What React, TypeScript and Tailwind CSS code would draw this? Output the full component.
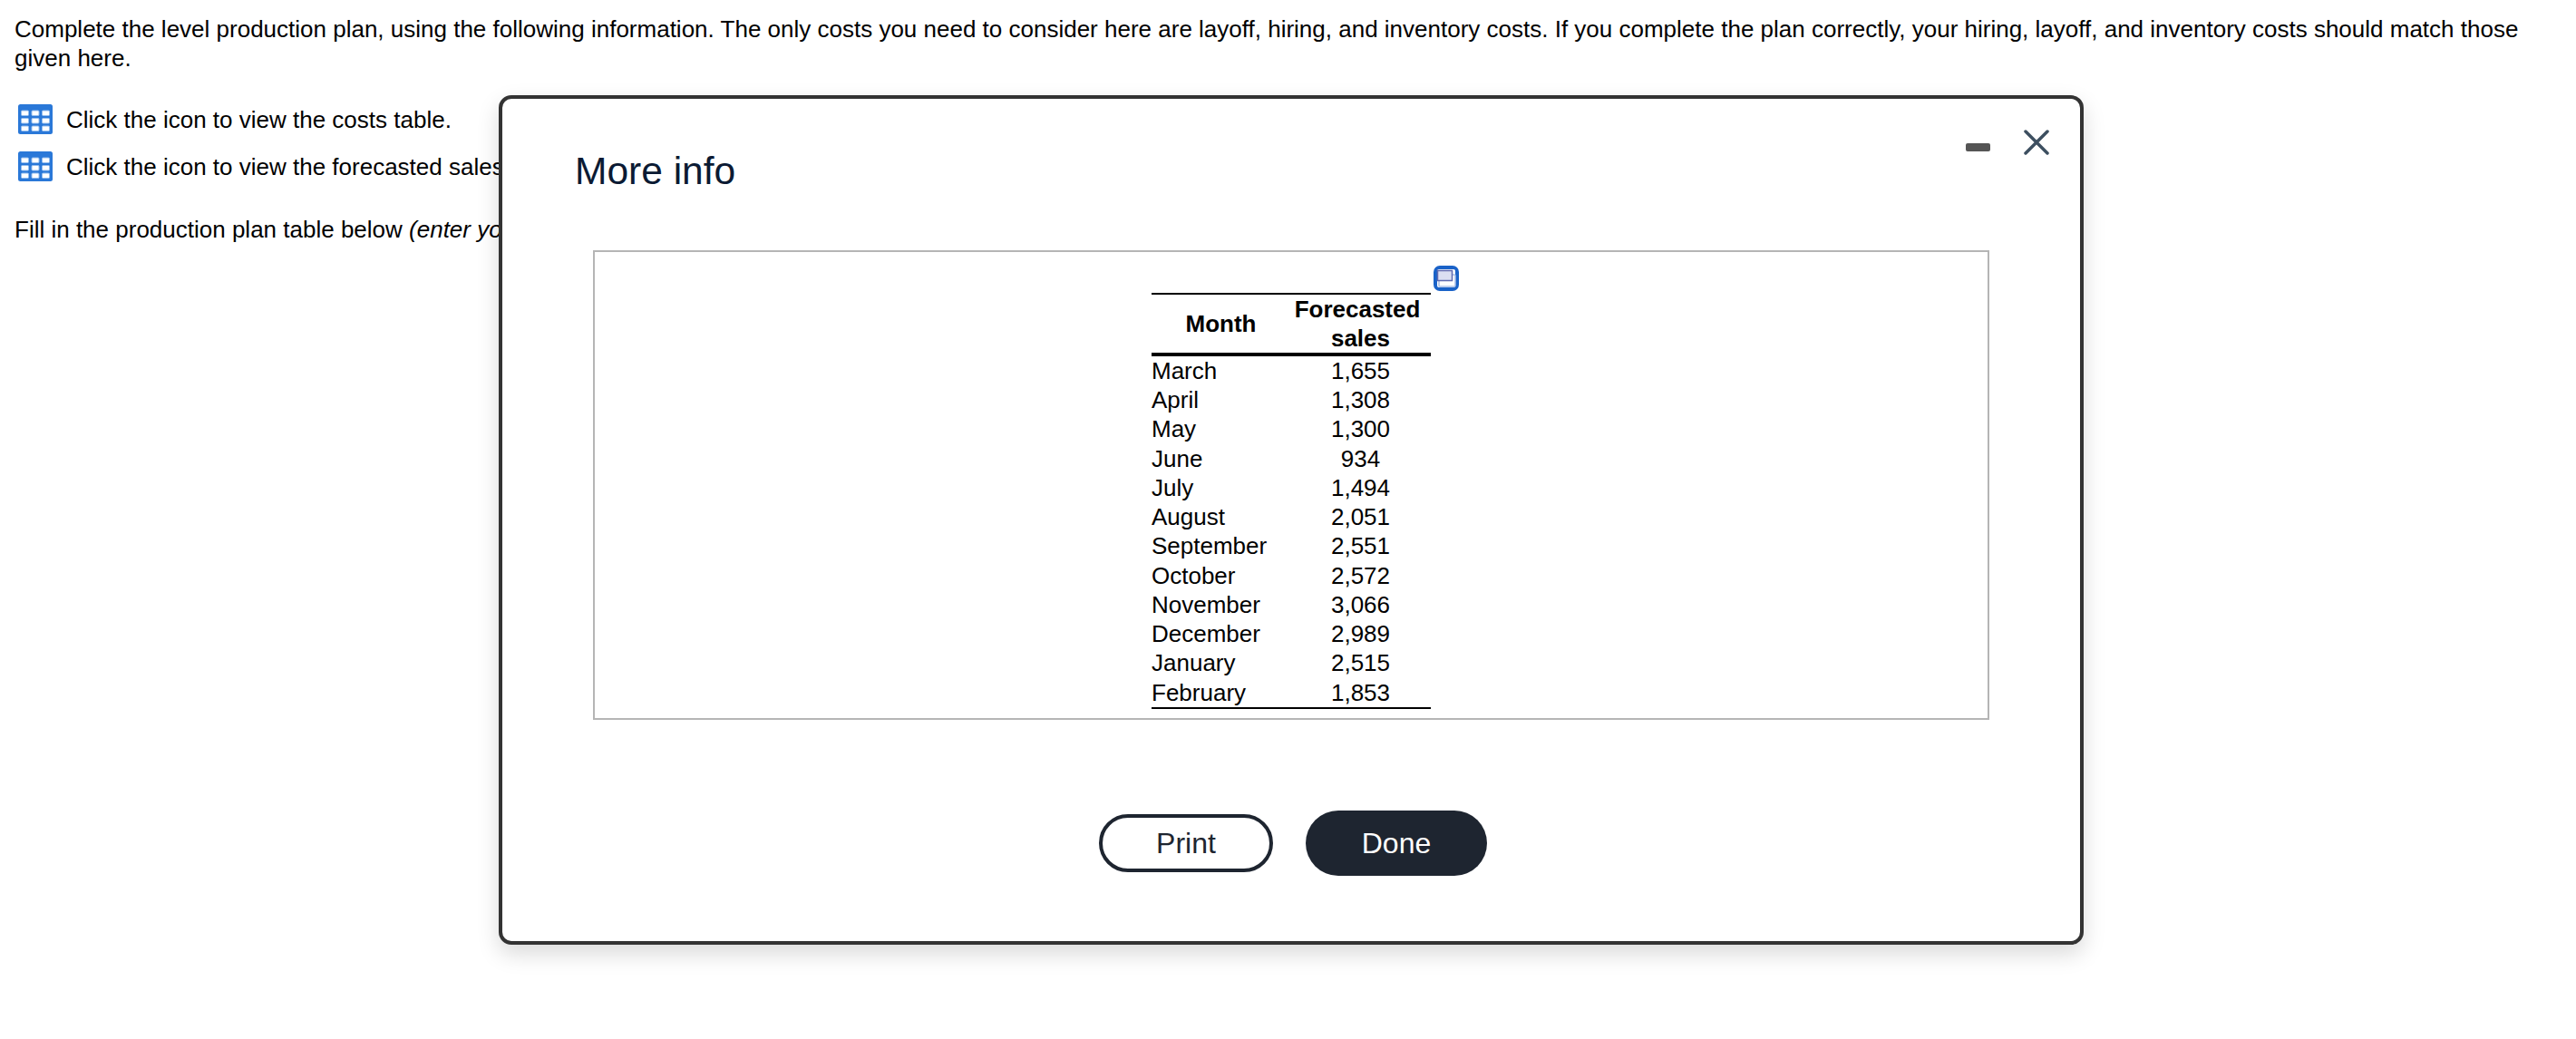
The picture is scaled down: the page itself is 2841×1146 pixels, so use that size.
import React from 'react';

const SALES = [
  ['March', '1,655'],
  ['April', '1,308'],
  ['May', '1,300'],
  ['June', '934'],
  ['July', '1,494'],
  ['August', '2,051'],
  ['September', '2,551'],
  ['October', '2,572'],
  ['November', '3,066'],
  ['December', '2,989'],
  ['January', '2,515'],
  ['February', '1,853'],
];

const TableIcon: React.FC = () => (
  <svg width="38" height="33" viewBox="0 0 38 33" className="shrink-0">
    <rect width="38" height="33" rx="2.5" fill="#2a78d8" />
    {[7, 15.5, 24].map(y =>
      [3.5, 15, 26.5].map(x => (
        <rect key={`${x}-${y}`} x={x} y={y} width="8" height="5.5" rx="1" fill="#ffffff" stroke="#93bdee" strokeWidth="1" />
      ))
    )}
  </svg>
);

const CopyIcon: React.FC = () => (
  <svg width="28" height="28" viewBox="0 0 28 28">
    <rect width="28" height="28" rx="7" fill="#1a62c8" />
    <rect x="4" y="4" width="20" height="20" rx="2" fill="#ffffff" />
    <rect x="6" y="10" width="18" height="13" rx="1" fill="none" stroke="#a9bfe6" strokeWidth="1.5" />
    <rect x="4.5" y="5.5" width="16" height="11" fill="#dcdff2" stroke="#5f6ab0" strokeWidth="1.5" />
  </svg>
);

const App: React.FC = () => {
  return (
    <div className="relative h-[1146px] w-[2841px] overflow-hidden bg-white text-[26px] leading-[32px] text-black font-['Liberation_Sans',Arial,sans-serif]">
      <div className="px-4 pt-4">
        <p className="w-[2790px]">
          Complete the level production plan, using the following information. The only costs you need to consider here are layoff, hiring, and inventory costs. If you complete the plan correctly, your hiring, layoff, and inventory costs should match those given here.
        </p>
        <div className="ml-1 mt-[35px] flex items-center gap-[15px]">
          <TableIcon />
          <span>Click the icon to view the costs table.</span>
        </div>
        <div className="ml-1 mt-[19px] flex items-center gap-[15px]">
          <TableIcon />
          <span>Click the icon to view the forecasted sales table.</span>
        </div>
        <p className="mt-[37px]">
          Fill in the production plan table below <em>(enter your responses as whole numbers).</em>
        </p>
      </div>

      <div className="absolute left-[550px] top-[105px] flex h-[937px] w-[1748px] flex-col rounded-[14px] border-4 border-[#333333] bg-white shadow-[0_10px_25px_rgba(0,0,0,0.15)]">
        <div className="flex h-[167px] items-start justify-between">
          <h2 className="ml-[80px] mt-[55px] text-[42.5px] leading-[50px] text-[#0b1a33]">More info</h2>
          <div className="mr-[34px] mt-[34px] flex items-center gap-[37px]">
            <span className="mt-[10px] block h-[9px] w-[27px] rounded-[2px] bg-[#555555]" />
            <svg width="28" height="28" viewBox="0 0 28 28" fill="none" stroke="#3d4f60" strokeWidth="3.5" strokeLinecap="round">
              <path d="M2 2 L26 26 M26 2 L2 26" />
            </svg>
          </div>
        </div>

        <div className="mx-[100px] flex justify-center border-2 border-[#b5b5b5] pb-[10px] pt-[45px]">
          <div className="relative">
            <table className="w-[308px] table-fixed border-collapse text-[26px]">
              <thead>
                <tr className="border-y-[2px] border-b-[4px] border-black">
                  <th className="w-[152px] p-0 pl-px font-bold">Month</th>
                  <th className="p-0 pl-px font-bold leading-[32px]">
                    <span className="block pr-[7px]">Forecasted</span>
                    <span className="block">sales</span>
                  </th>
                </tr>
              </thead>
              <tbody className="border-b-2 border-black">
                {SALES.map(([month, sales]) => (
                  <tr key={month} className="h-[32.25px] leading-[32px]">
                    <td className="p-0">{month}</td>
                    <td className="p-0 pl-px text-center">{sales}</td>
                  </tr>
                ))}
              </tbody>
            </table>
            <div className="absolute -right-[31px] -top-[30px]">
              <CopyIcon />
            </div>
          </div>
        </div>

        <div className="mt-[100px] flex items-center justify-center gap-9 pl-[4px] text-[32px]">
          <button className="h-16 w-48 rounded-full border-4 border-[#1e2530] bg-white text-[#1e2530]">Print</button>
          <button className="h-[72px] w-[200px] rounded-full bg-[#1e2530] text-white">Done</button>
        </div>
      </div>
    </div>
  );
};

export default App;
